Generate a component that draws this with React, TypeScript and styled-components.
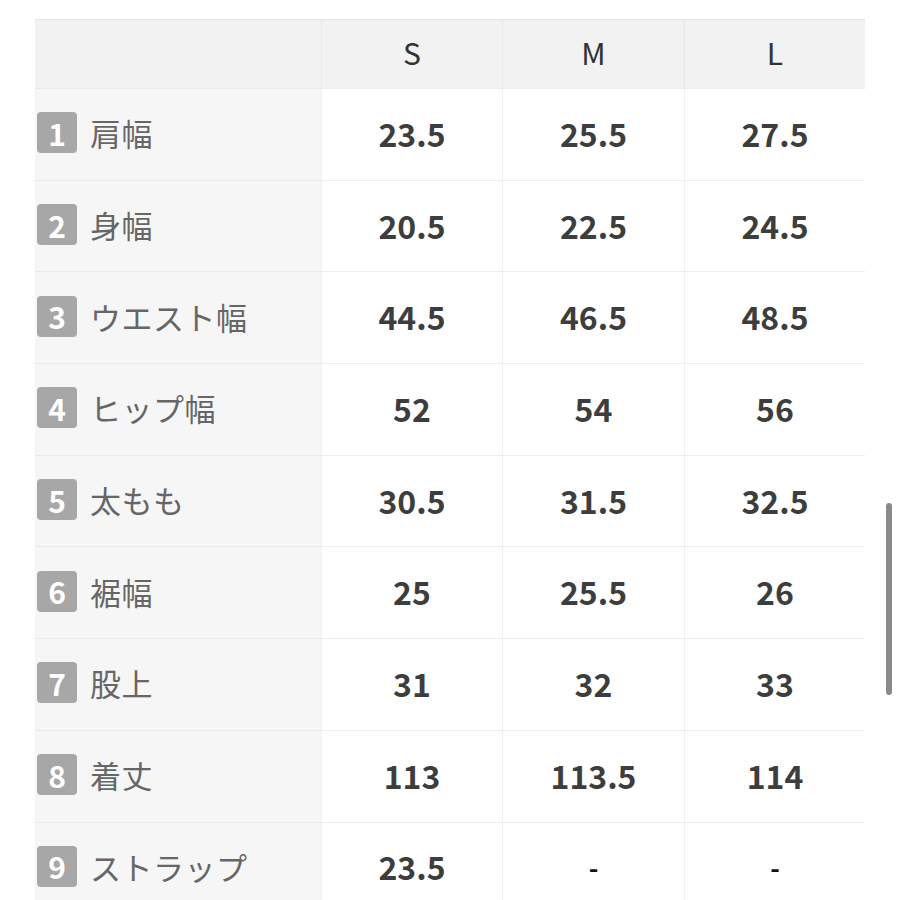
import React from "react";
import styled, { createGlobalStyle } from "styled-components";

const GlobalStyle = createGlobalStyle`
  html, body {
    margin: 0;
    padding: 0;
    background: #ffffff;
    height: 900px;
    overflow: hidden;
  }
  body {
    font-family: "Noto Sans CJK JP", "Noto Sans", sans-serif;
  }
`;

const sizes = ["S", "M", "L"];

const rows: { label: string; values: string[] }[] = [
  { label: "肩幅", values: ["23.5", "25.5", "27.5"] },
  { label: "身幅", values: ["20.5", "22.5", "24.5"] },
  { label: "ウエスト幅", values: ["44.5", "46.5", "48.5"] },
  { label: "ヒップ幅", values: ["52", "54", "56"] },
  { label: "太もも", values: ["30.5", "31.5", "32.5"] },
  { label: "裾幅", values: ["25", "25.5", "26"] },
  { label: "股上", values: ["31", "32", "33"] },
  { label: "着丈", values: ["113", "113.5", "114"] },
  { label: "ストラップ", values: ["23.5", "-", "-"] },
];

export default function App() {
  return (
    <>
      <GlobalStyle />
      <Page>
        <Table>
          <HeadLabel />
          {sizes.map((s) => (
            <HeadCell key={s}>{s}</HeadCell>
          ))}
          {rows.map((row, i) => (
            <React.Fragment key={row.label}>
              <LabelCell>
                <Badge>{i + 1}</Badge>
                <LabelText>{row.label}</LabelText>
              </LabelCell>
              {row.values.map((v, j) => (
                <ValueCell key={j} $dash={v === "-"}>
                  {v}
                </ValueCell>
              ))}
            </React.Fragment>
          ))}
        </Table>
        <ScrollThumb />
      </Page>
    </>
  );
}

// --- Styled Components ---
const Page = styled.div`
  position: relative;
  width: 900px;
  height: 900px;
  padding: 19px 35px 0 35px;
  box-sizing: border-box;
  overflow: hidden;
`;

const Table = styled.div`
  display: grid;
  grid-template-columns: 286px 181px 182px 181px;
  grid-template-rows: 68px;
  grid-auto-rows: 91.7px;
  width: 830px;
  border-top: 1px solid #e4e4e4;
`;

const HeadCell = styled.div`
  background: #f2f2f2;
  border-left: 1px solid #e8e8e8;
  display: flex;
  align-items: center;
  justify-content: center;
  font-size: 30px;
  color: #333333;
  padding-bottom: 4px;
  box-sizing: border-box;
`;

const HeadLabel = styled.div`
  background: #f2f2f2;
`;

const LabelCell = styled.div`
  background: #f6f6f6;
  border-top: 1px solid #e9e9e9;
  display: flex;
  align-items: center;
  gap: 13px;
  padding-left: 2px;
  padding-bottom: 3px;
  box-sizing: border-box;
`;

const Badge = styled.div`
  width: 40px;
  height: 41px;
  border-radius: 4px;
  background: #a7a7a7;
  color: #ffffff;
  font-weight: 700;
  font-size: 30px;
  display: flex;
  align-items: center;
  justify-content: center;
  flex-shrink: 0;
`;

const LabelText = styled.span`
  font-size: 31px;
  color: #666666;
  letter-spacing: 0.5px;
`;

const ValueCell = styled.div<{ $dash: boolean }>`
  background: #ffffff;
  border-top: 1px solid #ededed;
  border-left: 1px solid #f0f0f0;
  display: flex;
  align-items: center;
  justify-content: center;
  padding-bottom: 3px;
  font-size: ${({ $dash }) => ($dash ? "26px" : "32px")};
  font-weight: 700;
  color: ${({ $dash }) => ($dash ? "#111111" : "#3d3d3d")};
  box-sizing: border-box;
`;

const ScrollThumb = styled.div`
  position: absolute;
  left: 886px;
  top: 503px;
  width: 6px;
  height: 192px;
  border-radius: 3px;
  background: #8a8a8a;
`;
